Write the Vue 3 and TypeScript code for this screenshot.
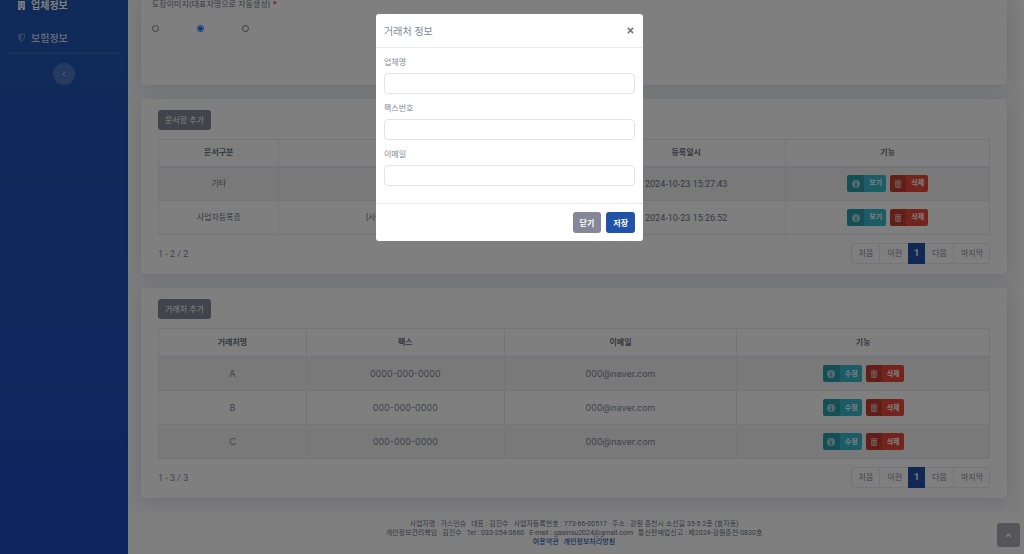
<script setup lang="ts">
import { ref } from 'vue'

interface DocumentRow {
  kind: string
  file: string
  date: string
}

interface ClientRow {
  name: string
  fax: string
  email: string
}

interface Field {
  id: string
  label: string
  type: string
}

const documents: DocumentRow[] = [
  { kind: '기타', file: '', date: '2024-10-23 15:27:43' },
  { kind: '사업자등록증', file: '[사업자등록증] 사업자등록증_2024.jpeg', date: '2024-10-23 15:26:52' },
]

const clients: ClientRow[] = [
  { name: 'A', fax: '0000-000-0000', email: '000@naver.com' },
  { name: 'B', fax: '000-000-0000', email: '000@naver.com' },
  { name: 'C', fax: '000-000-0000', email: '000@naver.com' },
]

const fields: Field[] = [
  { id: 'client-name', label: '업체명', type: 'text' },
  { id: 'client-fax', label: '팩스번호', type: 'text' },
  { id: 'client-email', label: '이메일', type: 'email' },
]

const pages = ['처음', '이전', '1', '다음', '마지막']
const stamp = ref('2')
</script>

<template>
  <div class="page">
    <nav class="sidebar">
      <a href="#" class="nav-link active">
        <svg class="nav-icon" viewBox="0 0 14 16" aria-hidden="true">
          <path
            fill="currentColor"
            fill-rule="evenodd"
            d="M1 0h12v16H8.500v-3.500h-3V16H1zM3.500 2.500v2h2v-2zM8.500 2.500v2h2v-2zM3.500 6v2h2V6zM8.500 6v2h2V6zM3.500 9.300v2h2v-2zM8.500 9.300v2h2v-2z"
          />
        </svg>
        <span>업체정보</span>
      </a>
      <a href="#" class="nav-link">
        <svg class="nav-icon dim" viewBox="0 0 16 16" aria-hidden="true">
          <path
            fill="currentColor"
            fill-rule="evenodd"
            d="M8 0l6.500 2.700c.5 6-1.800 10.800-6.500 13.300C3.300 13.500 1 8.700 1.500 2.700zM8 2.200v11.500c3.100-2 4.700-5.300 4.600-9.600z"
          />
        </svg>
        <span>보험정보</span>
      </a>
      <hr class="divider" />
      <button type="button" class="toggle" aria-label="메뉴 접기">
        <svg viewBox="0 0 8 12" aria-hidden="true">
          <path d="M6 2L2 6l4 4" fill="none" stroke="currentColor" stroke-width="2" />
        </svg>
      </button>
    </nav>

    <div class="content">
      <main class="main">
        <section class="card stamp-card">
          <p class="stamp-title">도장이미지(대표자명으로 자동생성) <span class="required">*</span></p>
          <div class="radios">
            <input
              v-for="n in ['1', '2', '3']"
              :key="n"
              v-model="stamp"
              type="radio"
              name="stamp"
              :value="n"
              :aria-label="`도장 ${n}`"
            />
          </div>
        </section>

        <section class="card">
          <button type="button" class="btn secondary">문서함 추가</button>
          <table class="table documents">
            <colgroup>
              <col class="d1" />
              <col class="d2" />
              <col class="d3" />
              <col class="d4" />
            </colgroup>
            <thead>
              <tr>
                <th>문서구분</th>
                <th>파일명</th>
                <th>등록일시</th>
                <th>기능</th>
              </tr>
            </thead>
            <tbody>
              <tr v-for="row in documents" :key="row.date">
                <td class="ko">{{ row.kind }}</td>
                <td class="ko">{{ row.file }}</td>
                <td>{{ row.date }}</td>
                <td>
                  <div class="actions">
                    <button type="button" class="split info">
                      <span class="split-icon">
                        <svg viewBox="0 0 16 16" aria-hidden="true">
                          <path
                            fill="currentColor"
                            fill-rule="evenodd"
                            d="M8 0a8 8 0 100 16A8 8 0 008 0zM6.800 3h2.400v2.400H6.800zM6 6.800h3.200v4.400H10V13H6v-1.800h.8V8.600H6z"
                          />
                        </svg>
                      </span>
                      <span class="split-text">보기</span>
                    </button>
                    <button type="button" class="split danger">
                      <span class="split-icon">
                        <svg viewBox="0 0 14 16" aria-hidden="true">
                          <path
                            fill="currentColor"
                            fill-rule="evenodd"
                            d="M0 1h4l1-1h4l1 1h4v2H0zM1 4h12l-.8 12H1.800zM4 6v8h1V6zM6.500 6v8h1V6zM9 6v8h1V6z"
                          />
                        </svg>
                      </span>
                      <span class="split-text">삭제</span>
                    </button>
                  </div>
                </td>
              </tr>
            </tbody>
          </table>
          <div class="table-foot">
            <span>1 - 2 / 2</span>
            <nav class="pager" aria-label="문서함 페이지">
              <a v-for="p in pages" :key="p" href="#" :class="{ current: p === '1' }">{{ p }}</a>
            </nav>
          </div>
        </section>

        <section class="card">
          <button type="button" class="btn secondary">거래처 추가</button>
          <table class="table clients">
            <colgroup>
              <col class="c1" />
              <col class="c2" />
              <col class="c3" />
              <col class="c4" />
            </colgroup>
            <thead>
              <tr>
                <th>거래처명</th>
                <th>팩스</th>
                <th>이메일</th>
                <th>기능</th>
              </tr>
            </thead>
            <tbody>
              <tr v-for="row in clients" :key="row.name">
                <td>{{ row.name }}</td>
                <td>{{ row.fax }}</td>
                <td>{{ row.email }}</td>
                <td>
                  <div class="actions">
                    <button type="button" class="split info">
                      <span class="split-icon">
                        <svg viewBox="0 0 16 16" aria-hidden="true">
                          <path
                            fill="currentColor"
                            fill-rule="evenodd"
                            d="M8 0a8 8 0 100 16A8 8 0 008 0zM6.800 3h2.400v2.400H6.800zM6 6.800h3.200v4.400H10V13H6v-1.800h.8V8.600H6z"
                          />
                        </svg>
                      </span>
                      <span class="split-text">수정</span>
                    </button>
                    <button type="button" class="split danger">
                      <span class="split-icon">
                        <svg viewBox="0 0 14 16" aria-hidden="true">
                          <path
                            fill="currentColor"
                            fill-rule="evenodd"
                            d="M0 1h4l1-1h4l1 1h4v2H0zM1 4h12l-.8 12H1.800zM4 6v8h1V6zM6.500 6v8h1V6zM9 6v8h1V6z"
                          />
                        </svg>
                      </span>
                      <span class="split-text">삭제</span>
                    </button>
                  </div>
                </td>
              </tr>
            </tbody>
          </table>
          <div class="table-foot">
            <span>1 - 3 / 3</span>
            <nav class="pager" aria-label="거래처 페이지">
              <a v-for="p in pages" :key="p" href="#" :class="{ current: p === '1' }">{{ p }}</a>
            </nav>
          </div>
        </section>
      </main>

      <footer class="footer">
        <div class="footer-line">
          <span>사업자명 : 가스인슈</span>
          <span>대표 : 김진수</span>
          <span>사업자등록번호 : 773-66-00517</span>
          <span>주소 : 강원 춘천시 소선길 35-5 2층 (효자동)</span>
        </div>
        <div class="footer-line">
          <span>개인정보관리책임 : 김진수</span>
          <span>Tel : 033-254-3660</span>
          <span>E-mail : gasinsu2024@gmail.com</span>
          <span>통신판매업신고 : 제2024-강원춘천-0830호</span>
        </div>
        <div class="footer-line links">
          <a href="#">이용약관</a>
          <a href="#">개인정보처리방침</a>
        </div>
      </footer>
    </div>

    <a href="#" class="scroll-top" aria-label="맨 위로">
      <svg viewBox="0 0 12 8" aria-hidden="true">
        <path d="M2 6l4-4 4 4" fill="none" stroke="currentColor" stroke-width="2.400" />
      </svg>
    </a>
  </div>

  <div class="backdrop">
    <form class="modal" role="dialog" aria-modal="true" aria-labelledby="modal-title" @submit.prevent>
      <header class="modal-head">
        <h5 id="modal-title">거래처 정보</h5>
        <button type="button" class="close" aria-label="창 닫기">
          <svg viewBox="0 0 8 8" aria-hidden="true">
            <path d="M1 1l6 6M7 1L1 7" fill="none" stroke="currentColor" stroke-width="1.800" />
          </svg>
        </button>
      </header>
      <div class="modal-body">
        <div v-for="f in fields" :key="f.id" class="field">
          <label :for="f.id">{{ f.label }}</label>
          <input :id="f.id" :type="f.type" />
        </div>
      </div>
      <footer class="modal-foot">
        <button type="button" class="btn secondary strong">닫기</button>
        <button type="submit" class="btn primary strong">저장</button>
      </footer>
    </form>
  </div>
</template>

<style>
html,
body {
  margin: 0;
  height: 100%;
  overflow: hidden;
  background: #fff;
}
</style>

<style scoped>
* {
  box-sizing: border-box;
}

.page,
.backdrop {
  font-family: Inter, 'Noto Sans CJK KR', sans-serif;
  font-size: 9px;
  line-height: 14px;
  color: #858796;
}

.page {
  display: flex;
  min-height: 100vh;
  padding-right: 4px;
}

button,
input {
  font-family: inherit;
}

button {
  padding: 0;
  border: 0;
}

a {
  text-decoration: none;
}

.sidebar {
  display: flex;
  flex-direction: column;
  flex: 0 0 128px;
  background: linear-gradient(180deg, #2054b2 10%, #2149c0 100%);
}

.nav-link {
  display: flex;
  align-items: center;
  gap: 5px;
  height: 31px;
  padding-left: 17px;
  font-size: 10px;
  font-weight: 500;
  color: rgba(255, 255, 255, 0.8);
}

.nav-link.active {
  height: 22px;
  padding-bottom: 12px;
  font-weight: 700;
  color: #fff;
}

.nav-icon {
  width: 9px;
  height: 9px;
}

.nav-icon.dim {
  opacity: 0.4;
}

.divider {
  width: 112px;
  height: 1px;
  margin: 0 auto 9px;
  border: 0;
  background: rgba(255, 255, 255, 0.12);
}

.toggle {
  display: grid;
  place-items: center;
  align-self: center;
  width: 22px;
  height: 22px;
  border-radius: 50%;
  background: rgba(255, 255, 255, 0.2);
  color: rgba(255, 255, 255, 0.5);
}

.toggle svg {
  width: 4px;
  height: 6px;
}

.content {
  display: flex;
  flex: 1;
  flex-direction: column;
  min-width: 0;
  background: #f8f9fc;
}

.main {
  display: flex;
  flex-direction: column;
  gap: 14px;
  padding: 0 13px 14px;
}

.card {
  padding: 11px 17px 10px;
  border-radius: 3px;
  background: #fff;
  box-shadow: 0 2px 16px rgba(58, 59, 69, 0.15);
}

.stamp-card {
  height: 85px;
  padding: 0 11px;
}

.stamp-title {
  margin: 0;
  font-size: 8px;
  line-height: 8px;
  color: #6e707e;
}

.required {
  color: #f00;
}

.radios {
  display: flex;
  gap: 38px;
  padding-top: 17px;
}

.radios input {
  width: 7px;
  height: 7px;
  margin: 0;
}

.btn {
  display: block;
  height: 20px;
  padding: 0 7px;
  border-radius: 3px;
  font-size: 8px;
  line-height: 20px;
  color: #fff;
}

.btn.strong {
  height: 21px;
  font-weight: 700;
}

.secondary {
  background: #858796;
}

.primary {
  background: #2053a8;
}

.table {
  width: 100%;
  margin-top: 9px;
  table-layout: fixed;
  border-collapse: collapse;
  text-align: center;
}

.d1 { width: 14.5%; }
.d2 { width: 37%; }
.d3 { width: 24%; }
.d4 { width: 24.5%; }
.c1 { width: 17.8%; }
.c2 { width: 23.8%; }
.c3 { width: 28%; }
.c4 { width: 30.4%; }

.table,
.table th,
.table td {
  border: 1px solid #e8eaf2;
}

.table th,
.table td {
  padding: 0;
}

.table th {
  height: 27px;
  border-bottom-width: 2px;
  font-size: 8px;
  font-weight: 700;
}

.clients th {
  height: 28px;
}

.table td {
  height: 34px;
}

.documents,
.table-foot,
.footer {
  font-family: Roboto, 'Noto Sans CJK KR', sans-serif;
}

.table td.ko {
  font-size: 8px;
}

.documents td,
.table th {
  color: #6e707e;
}

.table tbody tr:nth-child(odd) {
  background: rgba(0, 0, 0, 0.05);
}

.actions {
  display: flex;
  justify-content: center;
  gap: 4px;
}

.split {
  display: flex;
  overflow: hidden;
  height: 17px;
  border-radius: 2px;
  font-size: 7px;
  font-weight: 700;
  line-height: 17px;
  color: #fff;
}

.split-icon {
  display: grid;
  place-items: center;
  width: 17px;
  height: 17px;
  background: rgba(0, 0, 0, 0.15);
  color: rgba(255, 255, 255, 0.6);
}

.danger .split-icon {
  width: 16px;
}

.split-icon svg {
  width: 8px;
  height: 8px;
}

.split-text {
  padding: 0 4px 0 5px;
}

.info {
  background: #36b9cc;
}

.danger {
  background: #e74a3b;
}

.table-foot {
  display: flex;
  align-items: center;
  justify-content: space-between;
  margin-top: 8px;
}

.pager {
  display: flex;
  height: 21px;
  border: 1px solid #e8eaf2;
  border-radius: 3px;
  font-size: 8px;
  line-height: 19px;
}

.pager a {
  padding: 0 6px 0 7px;
  color: #858796;
}

.pager a + a {
  border-left: 1px solid #e8eaf2;
}

.pager a.current {
  margin: -1px 0;
  padding: 0 6px;
  border: 0;
  background: #2053a8;
  font-size: 9px;
  font-weight: 700;
  line-height: 21px;
  color: #fff;
}

.pager a.current + a {
  border-left: 0;
}

.footer {
  flex: 1;
  padding: 8px 0 7px;
  background: #fff;
  font-size: 7px;
  line-height: 9px;
  color: #6e707e;
}

.footer-line {
  display: flex;
  justify-content: center;
  gap: 5px;
  white-space: nowrap;
}

.links a {
  font-weight: 500;
  color: #2053a8;
}

.scroll-top {
  position: fixed;
  right: 4px;
  bottom: 7px;
  display: grid;
  place-items: center;
  width: 23px;
  height: 24px;
  border-radius: 3px;
  background: rgba(90, 92, 105, 0.5);
  color: #fff;
}

.scroll-top svg {
  width: 7px;
  height: 5px;
}

.backdrop {
  position: fixed;
  inset: 0;
  display: flex;
  align-items: flex-start;
  justify-content: center;
  padding: 14px 5px 0 0;
  background: rgba(0, 0, 0, 0.5);
}

.modal {
  width: 267px;
  border-radius: 3px;
  background: #fff;
}

.modal-head {
  display: flex;
  align-items: center;
  justify-content: space-between;
  height: 34px;
  padding: 0 8px;
  border-bottom: 1px solid #e8eaf2;
}

.modal-head h5 {
  margin: 0;
  font-size: 10px;
  font-weight: 400;
}

.close {
  display: grid;
  place-items: center;
  width: 9px;
  height: 14px;
  background: none;
  color: #777;
}

.close svg {
  width: 7px;
  height: 7px;
}

.modal-body {
  display: flex;
  flex-direction: column;
  gap: 7px;
  padding: 7px 8px 17px;
}

.field {
  display: flex;
  flex-direction: column;
  gap: 4px;
}

.field label {
  font-size: 8px;
}

.field input {
  width: 100%;
  height: 21px;
  padding: 0 7px;
  border: 1px solid #e1e3ed;
  border-radius: 4px;
  outline: 0;
  background: #fff;
  font-size: 9px;
}

.modal-foot {
  display: flex;
  justify-content: flex-end;
  gap: 5px;
  padding: 8px;
  border-top: 1px solid #e8eaf2;
}
</style>
